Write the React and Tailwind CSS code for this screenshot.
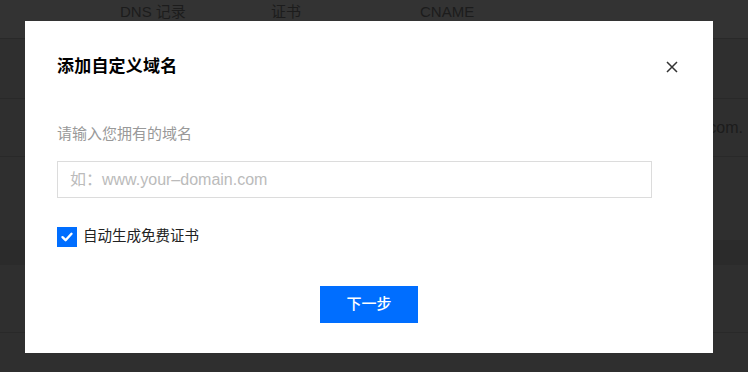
import { useState } from 'react';

const FONT = { fontFamily: '"Liberation Sans", "Noto Sans CJK SC", sans-serif' };

function BackgroundTable() {
  return (
    <div className="flex flex-col h-[372px] bg-[#2f2f2f] text-[#1c1c1c]">
      <div className="h-[39px] flex items-start pt-[3px] bg-[#333333] border-b border-[#292929] text-[15px] leading-[18px]">
        <span className="w-[120px]" />
        <span className="w-[151px]">DNS 记录</span>
        <span className="w-[149px]">证书</span>
        <span>CNAME</span>
      </div>
      <div className="h-[60px] border-b border-[#292929]" />
      <div className="h-[58px] border-b border-[#292929] flex items-center justify-end pr-[5px] text-[16px]">
        your-domain.com.
      </div>
      <div className="h-[83px]" />
      <div className="h-[25px] bg-[#2b2b2b]" />
      <div className="h-[68px] border-b border-[#292929]" />
      <div className="flex-1" />
    </div>
  );
}

export default function App() {
  const [checked, setChecked] = useState(true);
  const [domain, setDomain] = useState('');

  return (
    <div className="relative w-[748px] h-[372px] overflow-hidden" style={FONT}>
      <BackgroundTable />

      {/* Modal dialog */}
      <div className="absolute left-[25px] top-[21px] w-[688px] h-[332px] bg-white px-[32px] pt-[34px]">
        <div className="flex items-center justify-between h-[24px]">
          <h2 className="text-[17px] font-bold text-[#000] tracking-[0.2px]">添加自定义域名</h2>
          <button type="button" className="w-[20px] h-[20px] flex items-center justify-center mr-[-1px] text-[#333]">
            <svg width="12" height="12" viewBox="0 0 12 12" fill="none" stroke="currentColor" strokeWidth="1.5">
              <path d="M1 1L11 11M11 1L1 11" />
            </svg>
          </button>
        </div>

        <div className="mt-[44px] text-[15px] text-[#999] leading-[22px]">请输入您拥有的域名</div>

        <input
          type="text"
          value={domain}
          onChange={(e) => setDomain(e.target.value)}
          placeholder="如：www.your–domain.com"
          className="mt-[16px] block w-[595px] h-[37px] border border-[#dcdcdc] px-[12px] text-[16px] text-[#333] placeholder-[#bbbbbb] outline-none"
        />

        <label className="mt-[28px] flex items-center gap-[6px] cursor-pointer select-none">
          <span
            onClick={() => setChecked(!checked)}
            className={`w-[20px] h-[20px] flex items-center justify-center ${checked ? 'bg-[#006eff]' : 'bg-white border border-[#ccc]'}`}
          >
            {checked && (
              <svg width="14" height="14" viewBox="0 0 14 14" fill="none" stroke="white" strokeWidth="2.4" strokeLinecap="round" strokeLinejoin="round">
                <path d="M2.5 7.2L5.6 10.2L11.5 3.8" />
              </svg>
            )}
          </span>
          <span className="text-[14.5px] text-[#222]">自动生成免费证书</span>
        </label>

        <div className="mt-[38px] flex justify-center">
          <button type="button" className="w-[98px] h-[37px] bg-[#006eff] text-white text-[15px] font-medium">
            下一步
          </button>
        </div>
      </div>
    </div>
  );
}
